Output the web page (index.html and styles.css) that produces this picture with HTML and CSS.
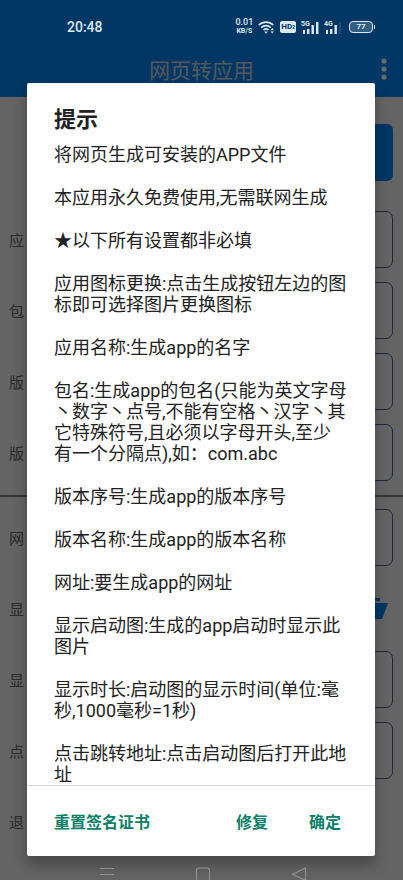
FILE: index.html
```
<!DOCTYPE html>
<html lang="zh-CN">
<head>
    <meta charset="UTF-8">
    <meta name="viewport" content="width=device-width, initial-scale=1.0">
    <title>网页转应用</title>
    <link rel="stylesheet" href="styles.css">
</head>
<body>
    <div class="app">
        <header class="app-bar">
            <h1>网页转应用</h1>
            <button class="menu-button" aria-label="更多">
                <svg width="6" height="22" viewBox="0 0 6 22" fill="currentColor">
                    <circle cx="3" cy="3" r="2.6"/><circle cx="3" cy="11" r="2.6"/><circle cx="3" cy="19" r="2.6"/>
                </svg>
            </button>
        </header>

        <form class="settings">
            <button type="button" class="generate" aria-label="生成"></button>
            <div class="field"><label for="appName">应</label><input type="text" id="appName"></div>
            <div class="field"><label for="packageName">包</label><input type="text" id="packageName"></div>
            <div class="field"><label for="versionCode">版</label><input type="text" id="versionCode"></div>
            <div class="field"><label for="versionName">版</label><input type="text" id="versionName"></div>
            <hr>
            <div class="field"><label for="url">网</label><input type="text" id="url"></div>
            <div class="field">
                <span>显</span>
                <button type="button" class="folder" aria-label="选择图片">
                    <svg width="28" height="22" viewBox="0 0 28 22" fill="currentColor">
                        <path d="M2 0h18v3H6L2 16z"/><path d="M7 5h21l-6 16H1z"/>
                    </svg>
                </button>
            </div>
            <div class="field"><label for="duration">显</label><input type="text" id="duration"></div>
            <div class="field"><label for="target">点</label><input type="text" id="target"></div>
            <div class="field"><span>退</span></div>
        </form>
    </div>

    <div class="scrim"></div>

    <div class="status-bar">
        <span class="clock">20:48</span>
        <div class="status-icons">
            <span class="speed"><b>0.01</b><small>KB/S</small></span>
            <svg width="17" height="14" viewBox="0 0 17 14" fill="none" stroke="currentColor" stroke-width="1.7">
                <path d="M.8 5a10.4 10.4 0 0 1 14.4 0M3.2 7.6a6.9 6.9 0 0 1 9.6 0M5.5 10a3.6 3.6 0 0 1 5 0"/>
                <path d="M6.2 11.6h3.6L8 13.8z" fill="currentColor" stroke="none"/>
                <path d="M12.6 10.2l1.6-2.2 1.6 2.2zM12.6 11.4l1.6 2.2 1.6-2.2z" fill="currentColor" stroke="none"/>
            </svg>
            <span class="hd">HD<i>2</i></span>
            <span class="signal"><em>5G</em>
                <svg width="18" height="13" viewBox="0 0 18 13" fill="currentColor">
                    <path d="M2 9h2v4H2zM6 8h2.4v5H6zM10.5 4h2.4v9h-2.4zM15 1h2.4v12H15z"/>
                </svg>
            </span>
            <span class="signal"><em>4G</em>
                <svg width="18" height="13" viewBox="0 0 18 13" fill="currentColor">
                    <path d="M2 9h2v4H2zM6 8h2.4v5H6zM10.5 4h2.4v9h-2.4z"/>
                    <path d="M15.5 1h1v12h-1z" opacity=".25"/>
                </svg>
            </span>
            <span class="battery">77</span>
        </div>
    </div>

    <nav class="nav-bar">
        <button aria-label="菜单">
            <svg width="16" height="16" viewBox="0 0 16 16"><path d="M1 3.5h14M1 9.5h14"/></svg>
        </button>
        <button aria-label="主页">
            <svg width="16" height="16" viewBox="0 0 16 16"><rect x="1.5" y="3" width="13" height="13" rx="2.5"/></svg>
        </button>
        <button aria-label="返回">
            <svg width="16" height="16" viewBox="0 0 16 16"><path d="M14.5 3v12.5L1.5 9.2z"/></svg>
        </button>
    </nav>

    <div class="dialog" role="dialog" aria-labelledby="dialogTitle">
        <h2 id="dialogTitle">提示</h2>
        <div class="message">
            <p>将网页生成可安装的APP文件</p>
            <p>本应用永久免费使用,无需联网生成</p>
            <p>★以下所有设置都非必填</p>
            <p>应用图标更换:点击生成按钮左边的图标即可选择图片更换图标</p>
            <p>应用名称:生成app的名字</p>
            <p>包名:生成app的包名(只能为英文字母丶数字丶点号,不能有空格丶汉字丶其它特殊符号,且必须以字母开头,至少有一个分隔点),如：com.abc</p>
            <p>版本序号:生成app的版本序号</p>
            <p>版本名称:生成app的版本名称</p>
            <p>网址:要生成app的网址</p>
            <p>显示启动图:生成的app启动时显示此图片</p>
            <p>显示时长:启动图的显示时间(单位:毫秒,1000毫秒=1秒)</p>
            <p>点击跳转地址:点击启动图后打开此地址</p>
        </div>
        <div class="actions">
            <button class="reset">重置签名证书</button>
            <button>修复</button>
            <button>确定</button>
        </div>
    </div>
</body>
</html>
```
FILE: styles.css
```
* {
    box-sizing: border-box;
}

body {
    margin: 0;
    font-family: Roboto, "Noto Sans CJK SC", sans-serif;
    background-color: #fafafa;
    height: 100vh;
    overflow: hidden;
}

button {
    font-family: inherit;
    background: none;
    border: none;
    padding: 0;
    cursor: pointer;
}

svg {
    display: block;
}

.app {
    display: flex;
    flex-direction: column;
    height: 100vh;
}

.app-bar {
    display: flex;
    align-items: center;
    height: 97px;
    padding: 40px 16px 0 22px;
    background-color: #0089fa;
    color: #d5dce4;
}

.app-bar h1 {
    flex: 1;
    margin: 0;
    font-size: 21px;
    font-weight: 400;
    text-align: center;
}

.menu-button {
    color: #fff;
}

.settings {
    flex: 1;
    display: flex;
    flex-direction: column;
    gap: 14px;
    min-height: 0;
    overflow: hidden;
    padding: 27px 10px 0 9px;
}

.generate {
    flex: none;
    align-self: flex-end;
    width: 60%;
    height: 57px;
    margin-bottom: 16px;
    background-color: #0089fa;
    border-radius: 6px;
}

.field {
    flex: none;
    display: flex;
    align-items: center;
    justify-content: space-between;
    height: 57px;
    font-size: 15px;
    color: #6c6c6c;
}

.field input {
    width: 70%;
    height: 57px;
    padding: 0 8px;
    background: none;
    border: 1px solid #3c6c9c;
    border-radius: 7px;
}

.settings hr {
    flex: none;
    width: 100vw;
    height: 2px;
    margin: 0 0 -2px -9px;
    border: none;
    background-color: #888;
}

.folder {
    margin-right: 5px;
    color: #0089fa;
}

.scrim {
    position: absolute;
    inset: 0;
    background-color: rgba(0, 0, 0, 0.6);
}

.nav-bar {
    position: absolute;
    bottom: 0;
    left: 0;
    right: 0;
    z-index: 1;
    display: flex;
    justify-content: space-between;
    height: 15px;
    padding: 0 96px 0 99px;
    overflow: hidden;
}

.nav-bar button {
    height: 16px;
}

.nav-bar svg {
    fill: none;
    stroke: #8e8e8e;
    stroke-width: 1.2;
}

.status-bar {
    position: absolute;
    top: 18px;
    left: 0;
    right: 0;
    display: flex;
    align-items: center;
    justify-content: space-between;
    height: 18px;
    padding: 0 30px 0 67px;
    color: #dbe9f4;
}

.clock {
    font-size: 14px;
    font-weight: 500;
}

.status-icons {
    display: flex;
    align-items: center;
    gap: 5px;
}

.speed {
    display: flex;
    flex-direction: column;
    align-items: center;
    font-size: 9px;
    line-height: 9px;
}

.speed b {
    font-weight: 500;
}

.speed small {
    font-size: 7px;
    line-height: 9px;
    font-weight: 700;
}

.hd {
    padding: 0 1px;
    font-size: 8px;
    line-height: 11px;
    font-weight: 700;
    color: #003764;
    background-color: #dbe9f4;
    border-radius: 2px;
}

.hd i {
    font-size: 5px;
    font-style: normal;
}

.signal {
    position: relative;
}

.signal em {
    position: absolute;
    top: -1px;
    left: 0;
    font-size: 7px;
    line-height: 8px;
    font-style: normal;
    font-weight: 700;
}

.battery {
    position: relative;
    width: 24px;
    margin-left: 2px;
    border: 1px solid #dbe9f4;
    border-radius: 4px;
    background-color: #345d82;
    font-size: 8px;
    line-height: 10px;
    font-weight: 700;
    text-align: center;
}

.battery::after {
    content: "";
    position: absolute;
    top: 3px;
    right: -3px;
    width: 1px;
    height: 4px;
    background-color: #dbe9f4;
}

.dialog {
    position: absolute;
    inset: 83px 28px 24px 27px;
    display: flex;
    flex-direction: column;
    background-color: #fff;
    border-radius: 2px;
    box-shadow: 0 9px 14px rgba(0, 0, 0, 0.3);
    color: #222;
}

.dialog h2 {
    margin: 0;
    padding: 20px 27px 7px;
    font-size: 22px;
    line-height: 34px;
    font-weight: 700;
}

.message {
    flex: 1;
    min-height: 0;
    overflow: hidden;
    padding: 0 27px;
    font-size: 18px;
    line-height: 21px;
}

.message p {
    margin: 0 0 22px;
}

.actions {
    flex: none;
    display: flex;
    align-items: center;
    gap: 41px;
    height: 71px;
    padding: 0 34px 0 27px;
    border-top: 1px solid #d8d8d8;
}

.actions button {
    font-size: 16px;
    font-weight: 700;
    color: #0b8068;
}

.actions .reset {
    margin-right: auto;
}
```
